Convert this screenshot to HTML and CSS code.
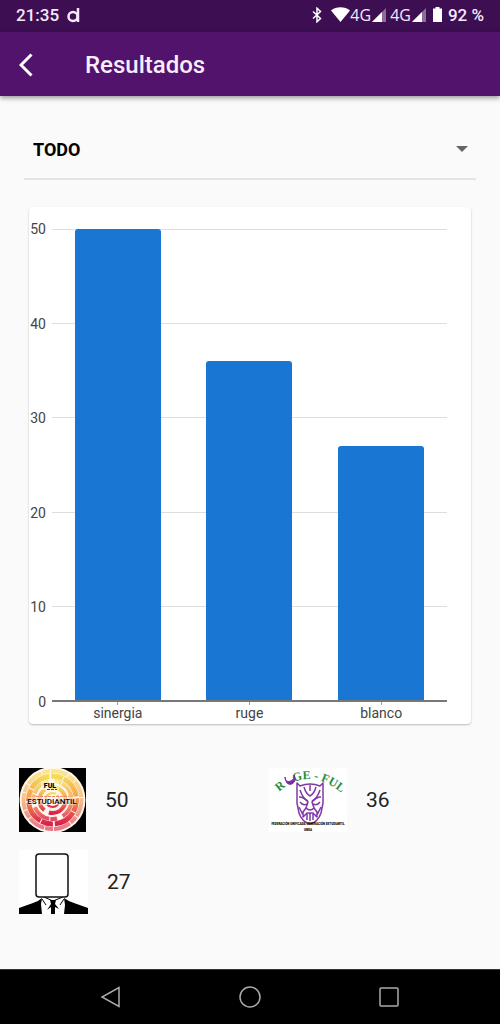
FILE: index.html
```html
<!DOCTYPE html>
<html lang="es">
<head>
    <meta charset="UTF-8">
    <meta name="viewport" content="width=device-width, initial-scale=1.0">
    <title>Resultados</title>
    <link rel="stylesheet" href="styles.css">
</head>
<body>
    <div class="status-bar">
        <span>21:35</span>
        <svg class="app-mark" width="14" height="16" viewBox="0 0 14 16" fill="none" stroke="#f6e9fb" stroke-width="2.500">
            <circle cx="6" cy="9.500" r="4.500"/>
            <path d="M11 1v14"/>
        </svg>
        <div class="status-icons">
            <svg class="bluetooth" width="10" height="16" viewBox="0 0 10 16" fill="none" stroke="#fff" stroke-width="1.500">
                <path d="M1 4.500l7.500 7L5 14.800V1.200l3.500 3.300L1 11.500"/>
            </svg>
            <svg width="19" height="15" viewBox="0 0 19 15" fill="#fff">
                <path d="M0 3.500C5-.8 14-.8 19 3.500L9.500 15z"/>
            </svg>
            <span class="network">4G</span>
            <svg class="signal" width="14" height="14" viewBox="0 0 14 14">
                <path d="M14 0v14H0z" fill="#8e6b9d"/>
                <path d="M10 4v10H0z" fill="#fff"/>
            </svg>
            <span class="network">4G</span>
            <svg class="signal" width="14" height="14" viewBox="0 0 14 14">
                <path d="M14 0v14H0z" fill="#8e6b9d"/>
                <path d="M10 4v10H0z" fill="#fff"/>
            </svg>
            <svg class="battery" width="9" height="15" viewBox="0 0 9 15" fill="#fff">
                <path d="M2.500 0h4v1.500H9V15H0V1.500h2.500z"/>
            </svg>
            <span>92 %</span>
        </div>
    </div>

    <header class="toolbar">
        <button class="back-button" type="button" aria-label="Volver">
            <svg width="14" height="24" viewBox="0 0 14 24" fill="none" stroke="#fff" stroke-width="3">
                <path d="M12.500 1.500L2 12l10.500 10.500"/>
            </svg>
        </button>
        <h1>Resultados</h1>
    </header>

    <main>
        <div class="filter">
            <select class="filter-select" aria-label="Filtro">
                <option>TODO</option>
            </select>
            <svg class="filter-arrow" width="12" height="6" viewBox="0 0 12 6" fill="#666">
                <path d="M0 0h12L6 6z"/>
            </svg>
        </div>

        <section class="chart-card">
            <div class="y-axis">
                <span>50</span>
                <span>40</span>
                <span>30</span>
                <span>20</span>
                <span>10</span>
                <span>0</span>
            </div>
            <div class="plot">
                <div class="grid-lines">
                    <i></i><i></i><i></i><i></i><i></i>
                </div>
                <div class="bars">
                    <div class="bar" style="height: 100%"></div>
                    <div class="bar" style="height: 72%"></div>
                    <div class="bar" style="height: 54%"></div>
                </div>
            </div>
            <div class="x-axis">
                <span>sinergia</span>
                <span>ruge</span>
                <span>blanco</span>
            </div>
        </section>

        <section class="results">
            <div class="result">
                <svg width="67" height="64" viewBox="0 0 67 64">
                    <defs>
                        <linearGradient id="sun" x1="0" y1="0" x2="0" y2="1">
                            <stop offset="0" stop-color="#f6dc58"/>
                            <stop offset=".45" stop-color="#f5a050"/>
                            <stop offset="1" stop-color="#d9214d"/>
                        </linearGradient>
                    </defs>
                    <path d="M0 0h67v64H0z"/>
                    <circle cx="33.500" cy="32" r="33" fill="#fff6e8"/>
                    <g fill="none" stroke="url(#sun)">
                        <circle cx="33.500" cy="32" r="29" stroke-width="4" stroke-dasharray="17 1 8 1" opacity=".6"/>
                        <circle cx="33.500" cy="32" r="24" stroke-width="5" stroke-dasharray="12 1 22 2"/>
                        <circle cx="33.500" cy="32" r="19" stroke-width="4" stroke-dasharray="19 6 7 1" opacity=".8"/>
                        <circle cx="33.500" cy="32" r="13" stroke-width="4" stroke-dasharray="24 5"/>
                        <circle cx="33.500" cy="32" r="7" stroke-width="2" stroke-dasharray="17 2"/>
                    </g>
                    <path d="M22 13h18v9H22zM9 29h48v8H9z" fill="#fff" opacity=".4"/>
                    <path d="M17 28.500h33" stroke="#ec8a6b" stroke-dasharray="3 1"/>
                    <path d="M28 21.500h10" stroke="#443" stroke-dasharray="3 1"/>
                    <text class="ful-name" x="31" y="20">FUL</text>
                    <text class="ful-group" x="33" y="36">ESTUDIANTIL</text>
                </svg>
                <span>50</span>
            </div>
            <div class="result">
                <svg width="78" height="64" viewBox="0 0 78 64">
                    <path d="M0 0h78v64H0z" fill="#fff"/>
                    <path id="arc" d="M10 24Q40-4 76 28" fill="none"/>
                    <text class="ruge-name"><textPath href="#arc" startOffset="0">R</textPath></text>
                    <text class="ruge-name"><textPath href="#arc" startOffset="18">GE - FUL</textPath></text>
                    <path d="M16 9q0 6 6 4q4-2 3-6q3 6-2 9q-6 2-7-7" fill="#7b2ca5" stroke="#7b2ca5"/>
                    <g fill="none" stroke="#8038a6" stroke-width="1.500" stroke-linejoin="round">
                        <path d="M28 15l3 3q5-2 10-2t10 2l3-3v20l-2 10q-3 9-11 11q-8-2-11-11l-2-10z"/>
                        <path d="M41 17v6M35 19q2 7 6 9q4-2 6-9M31 22q3 9 8 11M51 22q-3 9-8 11"/>
                        <path d="M30 29q5 0 9 5l-2 6M52 29q-5 0-9 5l2 6M31 34q3 4 7 2M51 34q-3 4-7 2"/>
                        <path d="M37 40q4 4 8 0l3 4v5l-4-4h-6l-4 4v-5zM30 39l5 10M52 39l-5 10M38 46v6M44 46v6M41 45v8"/>
                    </g>
                    <text class="ruge-motto" x="39" y="57">FEDERACIÓN UNIFICADA GENERACIÓN ESTUDIANTIL</text>
                    <text class="ruge-motto" x="39" y="63">UNSA</text>
                </svg>
                <span>36</span>
            </div>
            <div class="result">
                <svg width="69" height="64" viewBox="0 0 69 64">
                    <path d="M0 0h69v64H0z" fill="#fff"/>
                    <path d="M0 64v-6l14-5q6-2 9-5l-1 6 1 10zM69 64v-6l-14-5q-6-2-10-5l1 7-1 9z"/>
                    <path d="M25 47l9 4 10-4M23 49l4 6M45 49l-4 6" fill="none" stroke="#000"/>
                    <path d="M31 50h6l-1 4 4 5-4-2v7h-4v-7l-4 3 4-6z"/>
                    <rect x="17" y="4" width="32" height="43" rx="3" fill="#fff" stroke="#111" stroke-width="1.500"/>
                </svg>
                <span>27</span>
            </div>
        </section>
    </main>

    <nav class="nav-bar">
        <button type="button" aria-label="Atrás">
            <svg width="22" height="22" viewBox="0 0 22 22"><path d="M19 1.500v19L2 11z"/></svg>
        </button>
        <button type="button" aria-label="Inicio">
            <svg width="22" height="22" viewBox="0 0 22 22"><circle cx="11" cy="11" r="10"/></svg>
        </button>
        <button type="button" aria-label="Recientes">
            <svg width="22" height="22" viewBox="0 0 22 22"><rect x="2" y="2" width="18" height="18" rx="1"/></svg>
        </button>
    </nav>
</body>
</html>
```

FILE: styles.css
```css
* {
    box-sizing: border-box;
}

body {
    margin: 0;
    min-height: 100vh;
    display: flex;
    flex-direction: column;
    background-color: #fafafa;
    font-family: Roboto, "Liberation Sans", sans-serif;
    color: #222;
}

svg {
    display: block;
    flex: none;
}

button {
    padding: 0;
    border: none;
    background: none;
    cursor: pointer;
}

/* Barra de estado */
.status-bar {
    display: flex;
    align-items: center;
    height: 32px;
    padding: 0 16px 3px;
    background-color: #3d0e51;
    color: #f6e9fb;
    font-size: 17px;
    font-weight: 500;
    line-height: 28px;
}

.app-mark {
    margin-left: 8px;
}

.status-icons {
    display: flex;
    align-items: center;
    margin-left: auto;
}

.bluetooth {
    margin-right: 9px;
}

.network {
    font-family: "Open Sans", sans-serif;
    font-size: 16px;
    font-weight: 400;
}

.signal {
    margin: 0 4px 0 1px;
}

.battery {
    margin: 0 6px 0 3px;
}

/* Cabecera */
.toolbar {
    display: flex;
    align-items: center;
    height: 64px;
    padding: 2px 19px 0;
    background-color: #52136c;
    box-shadow: 0 2px 5px rgba(0, 0, 0, 0.4);
}

.back-button {
    width: 66px;
}

.toolbar h1 {
    margin: 0;
    color: #f9edfc;
    font-size: 24px;
    font-weight: 500;
}

/* Filtro */
.filter {
    display: grid;
    align-items: center;
    margin: 24px 24px 0;
    border-bottom: 2px solid #e5e5e5;
}

.filter-select {
    grid-area: 1 / 1;
    width: 100%;
    height: 58px;
    padding: 0 9px;
    border: none;
    appearance: none;
    background: transparent;
    color: #000;
    font-family: inherit;
    font-size: 18px;
    font-weight: 700;
}

.filter-arrow {
    grid-area: 1 / 1;
    justify-self: end;
    margin-right: 8px;
    pointer-events: none;
}

/* Gráfico */
.chart-card {
    display: grid;
    grid-template-columns: 17px 1fr;
    column-gap: 6px;
    margin: 27px 29px 0;
    padding: 14px 24px 3px 0;
    border-radius: 4px;
    background-color: #fff;
    box-shadow: 0 1px 2px rgba(0, 0, 0, 0.25);
    color: #444;
    font-size: 14px;
    line-height: 16px;
}

.y-axis {
    display: flex;
    flex-direction: column;
    justify-content: space-between;
    text-align: right;
}

.plot {
    display: grid;
    height: 473px;
    margin: 8px 0;
    border-bottom: 2px solid #777;
}

.grid-lines,
.bars {
    grid-area: 1 / 1;
    display: flex;
}

.grid-lines {
    flex-direction: column;
}

.grid-lines i {
    flex: 1;
    border-top: 1px solid #dedede;
}

.bars {
    align-items: flex-end;
    justify-content: space-around;
}

.bar {
    width: 65%;
    max-width: 86px;
    border-radius: 3px 3px 0 0;
    background-color: #1976d2;
}

.x-axis {
    grid-column: 2;
    display: grid;
    grid-template-columns: repeat(3, 1fr);
    margin-top: -8px;
    text-align: center;
}

.x-axis span::before {
    content: "";
    display: block;
    width: 1px;
    height: 3px;
    margin: 0 auto;
    background-color: #999;
}

/* Resultados */
.results {
    display: grid;
    grid-template-columns: 1fr 1fr;
    row-gap: 18px;
    padding: 44px 0 55px;
}

.result {
    display: flex;
    align-items: center;
    gap: 19px;
    padding-left: 19px;
    font-size: 21px;
}

.ful-name,
.ful-group,
.ruge-motto {
    text-anchor: middle;
}

.ful-name {
    font-size: 7px;
    font-weight: 900;
}

.ful-group {
    font-size: 8px;
    font-weight: 500;
}

.ruge-name {
    fill: #278a3c;
    font-family: "Liberation Serif", serif;
    font-size: 12px;
    font-weight: 700;
}

.ruge-motto {
    font-size: 3px;
    font-weight: 900;
}

/* Navegación */
.nav-bar {
    display: flex;
    align-items: center;
    justify-content: space-around;
    height: 55px;
    margin-top: auto;
    padding: 0 41px;
    border-top: 1px solid #333;
    background-color: #000;
}

.nav-bar svg {
    fill: none;
    stroke: #aaa;
    stroke-width: 1.5px;
}
```
